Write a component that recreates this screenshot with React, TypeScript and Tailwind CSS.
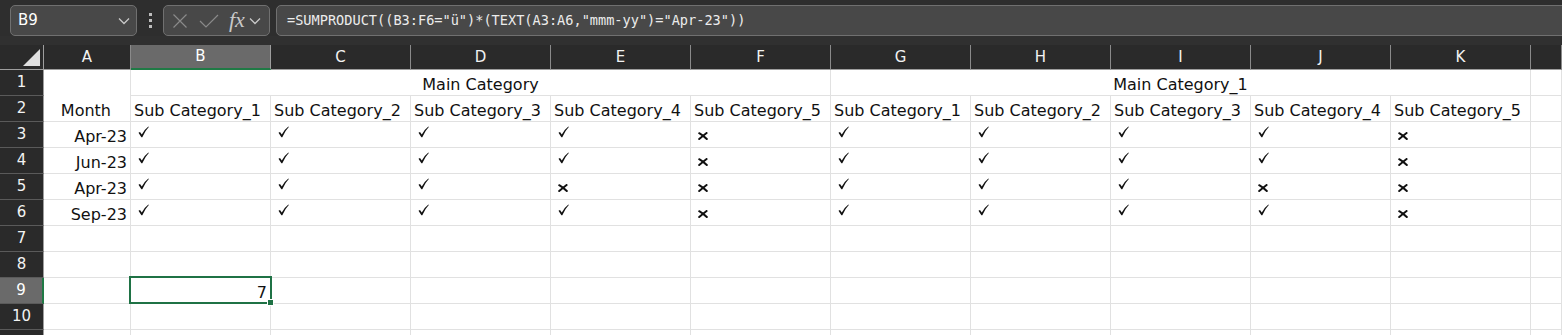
import React from "react";

const COLS = ["A", "B", "C", "D", "E", "F", "G", "H", "I", "J", "K", ""];

const MARKS: Record<number, string> = {
  3: "vvvvxvvvvx",
  4: "vvvvxvvvvx",
  5: "vvvxxvvvxx",
  6: "vvvvxvvvvx",
};

const DATES: Record<number, string> = { 3: "Apr-23", 4: "Jun-23", 5: "Apr-23", 6: "Sep-23" };

function Check() {
  return (
    <svg width="11" height="12" viewBox="0 0 11 12" className="block">
      <path d="M0.5 6.8 L2 5.9 L3.8 8.6 Q6.5 3.2 10.4 0.4 L10.8 1 Q7.2 4.6 4.3 11.2 L3.4 11.2 Z" fill="#111" />
    </svg>
  );
}

function Cross() {
  return (
    <svg width="10" height="8" viewBox="0 0 10 8" className="block">
      <path d="M1.2 1.2 Q5 3.4 8.8 7" stroke="#111" strokeWidth="2" fill="none" strokeLinecap="round" />
      <path d="M8.6 1 Q5 3.8 1.2 7" stroke="#111" strokeWidth="2" fill="none" strokeLinecap="round" />
    </svg>
  );
}

function Chevron({ color = "#c8c8c8" }: { color?: string }) {
  return (
    <svg width="12" height="8" viewBox="0 0 12 8" className="block">
      <path d="M1 1.5 L6 6.5 L11 1.5" stroke={color} strokeWidth="1.3" fill="none" />
    </svg>
  );
}

function TopBar() {
  return (
    <div className="bg-[#2e2e2e]">
      <div className="h-[36px] flex items-start pt-[5px] pl-[10px] overflow-hidden">
        <div className="w-[127px] h-[31px] shrink-0 rounded-[5px] border border-[#707070] bg-[#484848] flex items-center justify-between pl-[7px] pr-[6px]">
          <span className="text-[15px] text-white font-['DejaVu_Sans',sans-serif]">B9</span>
          <Chevron />
        </div>
        <div className="w-[26px] h-[31px] shrink-0 flex flex-col items-center justify-center gap-[3px]">
          <span className="w-[3px] h-[3px] bg-[#bdbdbd]" />
          <span className="w-[3px] h-[3px] bg-[#bdbdbd]" />
          <span className="w-[3px] h-[3px] bg-[#bdbdbd]" />
        </div>
        <div className="w-[107px] h-[31px] shrink-0 rounded-[5px] border border-[#707070] bg-[#484848] flex items-center pl-[8px]">
          <svg width="16" height="16" viewBox="0 0 16 16" className="block">
            <path d="M1.5 1.5 L14.5 14.5 M14.5 1.5 L1.5 14.5" stroke="#8a8a8a" strokeWidth="1.2" />
          </svg>
          <svg width="20" height="14" viewBox="0 0 20 14" className="block ml-[11px]">
            <path d="M1 7 L7 13 L19 1" stroke="#8a8a8a" strokeWidth="1.2" fill="none" />
          </svg>
          <span className="ml-[10px] text-[22px] leading-none italic text-[#c8c8c8] font-['Liberation_Serif',serif] -mt-[2px]">fx</span>
          <span className="ml-[4px]">
            <Chevron />
          </span>
        </div>
        <div className="ml-[6px] w-[1320px] h-[31px] shrink-0 rounded-[5px] border border-[#707070] bg-[#484848] flex items-center pl-[10px]">
          <span className="text-[13.6px] text-[#ececec] font-['DejaVu_Sans_Mono',monospace] whitespace-pre">
            =SUMPRODUCT((B3:F6="ü")*(TEXT(A3:A6,"mmm-yy")="Apr-23"))
          </span>
        </div>
      </div>
      <div className="h-[9px] bg-[#303030]" />
    </div>
  );
}

function HeaderRow() {
  return (
    <>
      <div className="h-[25px] bg-[#2a2a2a] border-b border-r border-[#9e9e9e] relative">
        <div className="absolute right-[3px] bottom-[3px] w-0 h-0 border-l-[17px] border-l-transparent border-b-[17px] border-b-[#e0e0e0]" />
      </div>
      {COLS.map((c, i) => (
        <div
          key={i}
          className={`h-[25px] flex items-center justify-center text-[15px] font-['DejaVu_Sans',sans-serif] ${
            c === "B"
              ? "bg-[#6a6a6a] text-white border-b-2 border-b-[#1f7a45] border-r border-r-[#9e9e9e]"
              : "bg-[#2a2a2a] text-[#f2f2f2] border-b border-[#9e9e9e] border-r border-r-[#8a8a8a]"
          }`}
        >
          {c}
        </div>
      ))}
    </>
  );
}

function RowHead({ n, label = true }: { n: number; label?: boolean }) {
  const sel = n === 9;
  return (
    <div
      className={`h-[26px] flex items-center justify-center text-[15px] font-['DejaVu_Sans',sans-serif] border-b border-b-[#5a5a5a] ${
        sel ? "bg-[#6a6a6a] text-white border-r-2 border-r-[#1f7a45]" : "bg-[#2a2a2a] text-[#f2f2f2] border-r border-r-[#9e9e9e]"
      }`}
    >
      {label ? n : null}
    </div>
  );
}

const cell = "h-[26px] border-r border-b border-[#e1e1e1] flex items-end pb-[1px] text-[16px] leading-[19px] text-[#111] font-['DejaVu_Sans',sans-serif] whitespace-nowrap overflow-hidden";

function Sheet() {
  const rows: React.ReactNode[] = [];

  // row 1
  rows.push(<RowHead key="h1" n={1} />);
  rows.push(
    <div key="a12" className="row-span-2 h-[52px] border-r border-b border-[#e1e1e1] flex items-end justify-end pb-[1px] pr-[19px] text-[16px] leading-[19px] text-[#111] font-['DejaVu_Sans',sans-serif]">
      Month
    </div>
  );
  rows.push(<div key="b1" className={`${cell} col-span-5 justify-center`}>Main Category</div>);
  rows.push(<div key="g1" className={`${cell} col-span-5 justify-center`}>Main Category_1</div>);
  rows.push(<div key="l1" className={cell} />);

  // row 2
  rows.push(<RowHead key="h2" n={2} />);
  for (let i = 0; i < 10; i++) {
    rows.push(
      <div key={`s${i}`} className={`${cell} pl-[3px]`}>
        Sub Category_{(i % 5) + 1}
      </div>
    );
  }
  rows.push(<div key="l2" className={cell} />);

  // rows 3-6
  for (let r = 3; r <= 6; r++) {
    rows.push(<RowHead key={`h${r}`} n={r} />);
    rows.push(
      <div key={`a${r}`} className={`${cell} justify-end pr-[3px]`}>
        {DATES[r]}
      </div>
    );
    MARKS[r].split("").forEach((m, i) => {
      rows.push(
        <div key={`m${r}${i}`} className={`${cell} pl-[7px] ${m === "v" ? "pb-[9px]" : "pb-[7px]"}`}>
          {m === "v" ? <Check /> : <Cross />}
        </div>
      );
    });
    rows.push(<div key={`l${r}`} className={cell} />);
  }

  // rows 7-11
  for (let r = 7; r <= 11; r++) {
    rows.push(<RowHead key={`h${r}`} n={r} label={r < 11} />);
    COLS.forEach((c, i) => {
      if (r === 9 && c === "B") {
        rows.push(
          <div key={`c${r}${i}`} className={`${cell} justify-end pr-[3px] relative overflow-visible`}>
            7
            <div className="absolute -left-[2px] -top-[2px] w-[143px] h-[28px] border-2 border-[#1f7245]" />
            <div className="absolute -right-[4px] -bottom-[3px] w-[7px] h-[7px] bg-[#1f7245] border border-white" />
          </div>
        );
      } else {
        rows.push(<div key={`c${r}${i}`} className={cell} />);
      }
    });
  }

  return (
    <div className="grid grid-cols-[44px_87px_repeat(10,140px)_31px]">
      <HeaderRow />
      {rows}
    </div>
  );
}

export default function App() {
  return (
    <div className="w-[1562px] h-[335px] overflow-hidden bg-white">
      <TopBar />
      <Sheet />
    </div>
  );
}
